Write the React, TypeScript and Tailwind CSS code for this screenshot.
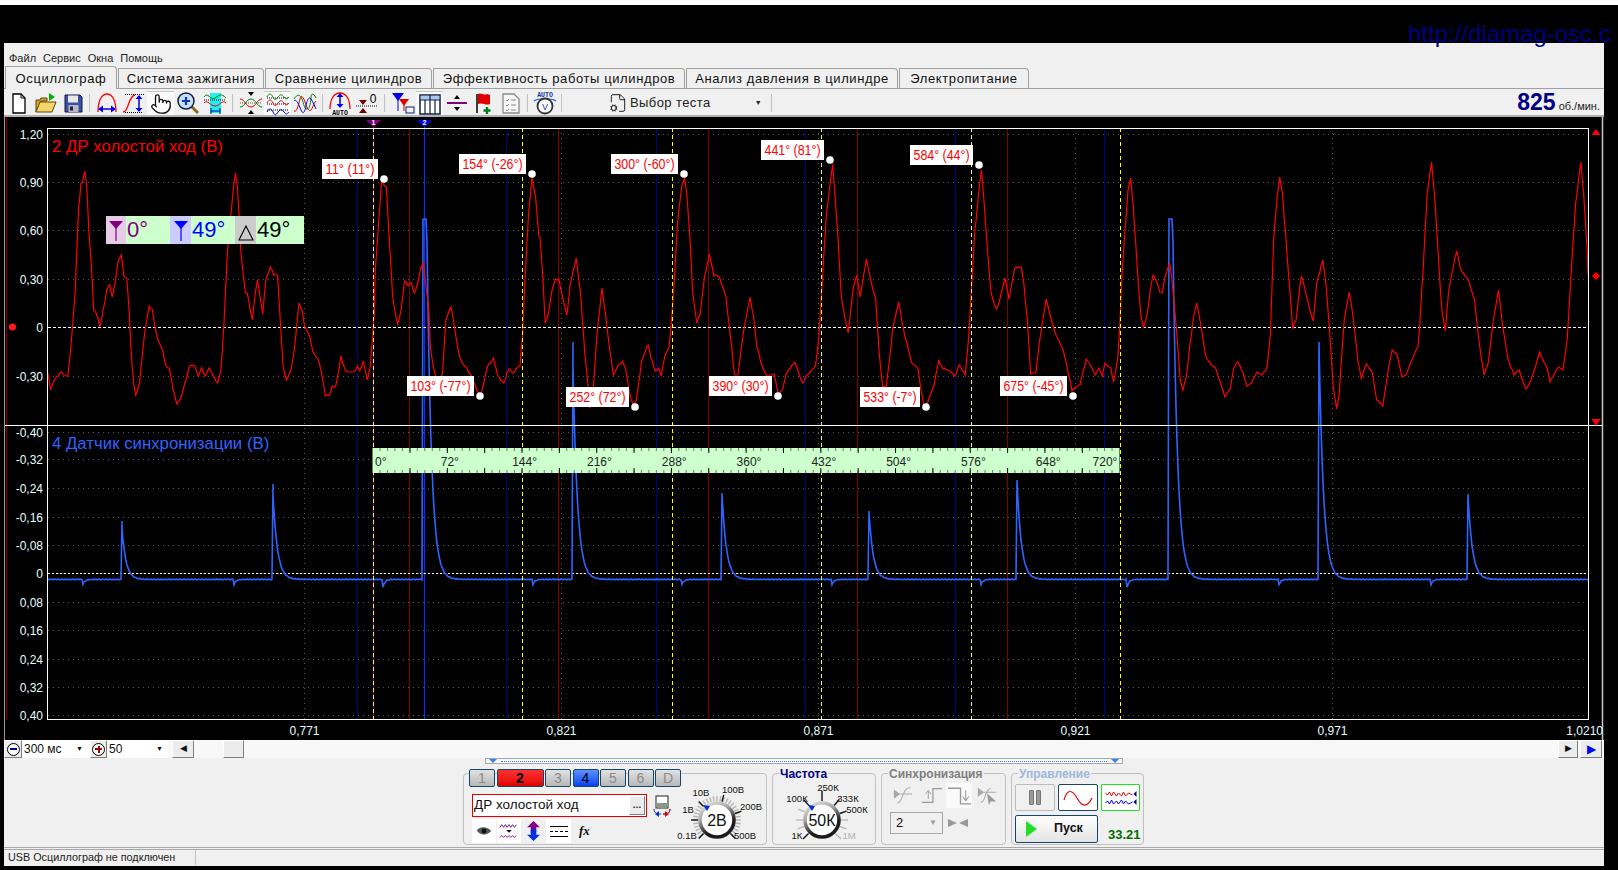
import { FileCog, Pointer } from "lucide-react";
import type { ReactNode } from "react";

// --- traced trace data (crop coordinates, converted below) ---
const RED_A = [137,750,147,808,155,785,165,770,178,757,185,765,197,768,205,690,212,600,218,520,228,270,235,195,240,185,246,155,252,200,258,330,265,430,272,570,280,580,290,620,300,570,310,510,318,495,326,530,334,490,343,425,352,402,360,470,368,475,375,570,380,680,388,790,394,825,405,790,420,640,433,560,442,570,452,630,460,665,472,690,482,740,492,745,503,810,514,855,528,825,540,780,550,737,566,737,575,768,585,745,595,768,607,745,620,768,632,792,642,745,650,620,660,400,670,290,678,200,684,155,690,210,695,300,700,400,708,480,713,520,718,520,725,560,733,600,740,530,748,478,755,530,763,580,772,480,785,440,795,462,806,465,815,620,822,740,832,780,845,750,855,690,868,548,878,575,885,620,900,650,908,695,925,720,932,750,945,825,955,828,965,800,975,800,990,712,1003,750,1015,758,1030,755,1038,737,1045,755,1055,725,1067,778,1075,740,1082,650,1087,580,1090,450,1100,300,1108,185,1115,195,1122,200,1130,350,1135,430,1140,530,1150,590,1155,615,1165,570,1175,480,1185,495,1195,490,1203,520,1213,490,1222,445,1230,430,1237,500,1245,560,1250,680,1258,740,1270,790,1285,760,1295,600,1310,558,1320,620,1330,690,1340,725,1355,745,1370,770,1385,810,1395,825,1405,790,1415,740,1433,715,1445,765,1463,790,1478,745,1490,760,1510,735,1517,650,1525,470,1535,280,1545,175,1555,230,1565,345];
const RED_B = [0,350,8,470,15,610,25,580,35,510,45,478,55,478,65,530,78,585,88,490,105,415,118,520,130,700,140,800,145,865,155,800,165,650,180,505,190,580,200,670,213,765,228,735,240,722,248,745,260,820,270,855,280,840,295,725,305,695,314,672,322,710,335,755,345,745,352,770,362,710,375,680,382,600,390,480,400,300,412,195,420,175,427,230,435,350,443,510,455,610,465,580,478,470,492,405,505,465,520,470,540,530,552,640,565,765,575,765,590,640,610,532,620,590,630,680,645,740,660,770,680,760,692,825,705,805,715,760,740,725,755,770,763,790,775,765,800,740,810,650,820,480,832,280,845,170,850,135,857,230,865,350,875,530,885,590,895,640,910,500,920,465,930,530,948,415,960,480,975,540,985,700,995,800,1005,800,1015,720,1025,620,1042,545,1050,600,1060,650,1080,730,1098,745,1105,800,1115,860,1125,850,1145,790,1158,722,1170,745,1185,750,1205,768,1218,735,1235,765,1245,650,1255,470,1262,340,1275,210,1282,150,1290,250,1300,400,1310,520,1325,570,1335,540,1350,475,1362,535,1378,445,1398,440,1405,490,1415,600,1425,760,1440,760,1450,670,1470,537,1485,600,1500,650,1520,690,1530,740,1545,810,1560,800];
const RED_C = [0,795,8,760,18,718,30,735,45,765,55,742,65,768,73,730,90,745,98,788,110,715,116,620,122,470,130,350,140,210,148,175,155,260,163,380,170,490,178,590,185,620,195,590,205,510,213,465,222,480,232,515,240,518,248,470,258,440,262,430,270,500,278,590,285,680,292,780,300,810,310,770,320,680,330,600,340,548,350,600,360,670,370,720,395,745,405,775,422,830,438,805,448,745,460,725,470,745,487,798,500,790,515,755,530,765,545,745,555,640,565,350,575,230,582,172,590,220,600,350,610,490,620,625,630,600,645,465,655,505,670,570,680,605,690,490,708,420,718,500,728,640,738,800,748,865,755,830,770,600,785,515,795,580,810,720,820,775,835,730,852,760,865,840,883,858,900,740,910,690,925,705,938,770,950,765,965,725,985,680,990,620,1000,450,1012,220,1025,125,1035,250,1050,500,1055,570,1065,630,1075,510,1090,430,1098,390,1110,450,1130,475,1150,540,1165,680,1178,765,1190,730,1205,600,1220,510,1232,620,1248,720,1265,765,1280,750,1300,810,1315,780,1340,698,1360,740,1370,785,1395,740,1408,750,1420,660,1435,400,1445,250,1460,125,1468,220,1478,380,1481,465];

function redPath() {
    const pts: [number, number][] = [];
    const add = (arr: number[], ox: number, sx: number) => {
        for (let i = 0; i < arr.length; i += 2) pts.push([ox + arr[i] / sx, 120 + arr[i + 1] / 3]);
    };
    add(RED_A, 0, 2.904);
    add(RED_B, 540, 2.904);
    add(RED_C, 1080, 2.915);
    let d = `M${pts[0][0].toFixed(1)} ${pts[0][1].toFixed(1)}`;
    for (let i = 1; i < pts.length; i++) {
        const [x0, y0] = pts[i - 1];
        const [x1, y1] = pts[i];
        const n = Math.max(1, Math.round((x1 - x0) / 1.5));
        for (let k = 1; k <= n; k++) {
            const x = x0 + ((x1 - x0) * k) / n;
            const y = y0 + ((y1 - y0) * k) / n + Math.sin(x * 2.3) * 0.5 + Math.sin(x * 5.1) * 0.4;
            d += `L${x.toFixed(1)} ${Math.round(y)}`;
        }
    }
    return d;
}

const SPIKES = [
    { x: 121.5, top: 521, h: 58, tau: 4 },
    { x: 272.5, top: 484, h: 95, tau: 4.4 },
    { x: 423, top: 219, h: 820, tau: 4.5 },
    { x: 572.5, top: 342, h: 237, tau: 4.5 },
    { x: 722, top: 493, h: 86, tau: 4.4 },
    { x: 869, top: 511, h: 68, tau: 4.2 },
    { x: 1017, top: 480, h: 99, tau: 4.4 },
    { x: 1169, top: 219, h: 820, tau: 4.5 },
    { x: 1319, top: 342, h: 237, tau: 4.5 },
    { x: 1468, top: 494, h: 85, tau: 4.4 },
];
const BLIPS = [83, 234, 383, 533, 682, 832, 981, 1127, 1279, 1431];

function bluePath() {
    let d = "M48 580";
    for (let x = 48; x <= 1588; x++) {
        const base = 579.4 + Math.sin(x * 1.7) * 0.4;
        let y = base;
        for (const s of SPIKES) {
            if (x === Math.round(s.x)) d += `L${x} ${s.top}`;
            if (x >= s.x) y = Math.min(y, Math.max(s.top, base - s.h * Math.exp(-(x - s.x) / s.tau)));
        }
        for (const b of BLIPS) {
            if (x >= b && x < b + 10) y += (b === 383 || b === 1127 ? 8 : 5) * Math.exp(-(x - b) / 2);
        }
        d += `L${x} ${y.toFixed(1)}`;
    }
    return d;
}

const AXIS_Y: [string, number][] = [
    ["1,20", 134], ["0,90", 182], ["0,60", 230], ["0,30", 279], ["0", 327], ["-0,30", 376],
    ["-0,40", 432], ["-0,32", 459], ["-0,24", 488], ["-0,16", 517], ["-0,08", 545], ["0", 573],
    ["0,08", 602], ["0,16", 630], ["0,24", 659], ["0,32", 687], ["0,40", 715],
];
const GRID_X = [304.5, 561.5, 818.5, 1075.5, 1332.5];
const X_LABELS = ["0,771", "0,821", "0,871", "0,921", "0,971"];
const YELLOW = [373.5, 522.5, 672.5, 821.5, 971.5, 1120.5];
const NAVY = [357.5, 506.5, 656.5, 805.5, 955.5, 1104.5];
const MAROON = [409.5, 558.5, 708.5, 857.5, 1007.5];

const PEAKS = [
    { t: "11° (11°)", x: 322, y: 159, w: 56, dx: 384, dy: 179 },
    { t: "154° (-26°)", x: 459, y: 154, w: 67, dx: 532, dy: 174 },
    { t: "103° (-77°)", x: 407, y: 376, w: 67, dx: 480, dy: 396 },
    { t: "300° (-60°)", x: 611, y: 154, w: 67, dx: 684, dy: 174 },
    { t: "441° (81°)", x: 761, y: 140, w: 63, dx: 830, dy: 160 },
    { t: "584° (44°)", x: 910, y: 145, w: 63, dx: 979, dy: 165 },
    { t: "252° (72°)", x: 566, y: 387, w: 63, dx: 635, dy: 407 },
    { t: "390° (30°)", x: 709, y: 376, w: 63, dx: 778, dy: 396 },
    { t: "533° (-7°)", x: 860, y: 387, w: 60, dx: 926, dy: 407 },
    { t: "675° (-45°)", x: 1000, y: 376, w: 67, dx: 1073, dy: 396 },
];

const RULER = ["0°", "72°", "144°", "216°", "288°", "360°", "432°", "504°", "576°", "648°", "720°"];

function Scope() {
    const minor: number[] = [];
    for (let x = 372.5; x < 1119; x += 7.47) minor.push(x);
    const major: number[] = [];
    for (let x = 410; x < 1119; x += 37.35) major.push(x);
    return (
        <svg viewBox="4 117 1600 623" className="absolute inset-0 h-full w-full" fontFamily="'Liberation Sans', Arial, sans-serif">
            {/* сетка */}
            {AXIS_Y.map(([l, y], i) => (
                <line key={i} x1={48} x2={1588} y1={y + 0.5} y2={y + 0.5} stroke="#5a5a5a" strokeDasharray="1 4" />
            ))}
            {GRID_X.map((x) => (
                <line key={x} x1={x} x2={x} y1={128} y2={725} stroke="#5a5a5a" strokeDasharray="1 4" />
            ))}
            {NAVY.map((x) => (
                <line key={x} x1={x} x2={x} y1={128} y2={719} stroke="#000080" />
            ))}
            {MAROON.map((x) => (
                <line key={x} x1={x} x2={x} y1={128} y2={719} stroke="#800000" />
            ))}
            <line x1={6.5} x2={6.5} y1={117} y2={720} stroke="#800000" />
            <line x1={4.5} x2={4.5} y1={117} y2={740} stroke="#9a9a9a" />
            <line x1={1602.5} x2={1602.5} y1={117} y2={740} stroke="#c8c8c8" strokeWidth={1.5} />
            <line x1={373.5} x2={373.5} y1={126} y2={719} stroke="#800080" />
            <line x1={424.5} x2={424.5} y1={126} y2={719} stroke="#0a2eff" strokeWidth={1.2} />

            <line x1={48} x2={1588} y1={327.5} y2={327.5} stroke="#fff" strokeDasharray="3 2" />
            <line x1={48} x2={1588} y1={573.5} y2={573.5} stroke="#fff" strokeDasharray="2 2" />

            {/* сигналы */}
            <path d={bluePath()} fill="none" stroke="#2f63ff" strokeWidth={1.6} />
            <path d={redPath()} fill="none" stroke="#ff0000" strokeWidth={1.2} />

            {YELLOW.map((x) => (
                <line key={x} x1={x} x2={x} y1={128} y2={719} stroke="#ffff00" strokeDasharray="4 3" />
            ))}

            {/* рамка */}
            <rect x={47.5} y={128.5} width={1541} height={591} fill="none" stroke="#fff" />
            <line x1={5} x2={1602} y1={425.5} y2={425.5} stroke="#fff" />

            {/* линейка градусов */}
            <rect x={372.5} y={448} width={747} height={25} fill="#ccffcc" />
            {minor.map((x) => (
                <g key={x} stroke="#777">
                    <line x1={x} x2={x} y1={448} y2={451} />
                    <line x1={x} x2={x} y1={470} y2={473} />
                </g>
            ))}
            {major.map((x) => (
                <g key={x} stroke="#111">
                    <line x1={x} x2={x} y1={448} y2={453} />
                    <line x1={x} x2={x} y1={468} y2={473} />
                </g>
            ))}
            {RULER.map((t, i) => (
                <text key={t} x={i === 0 ? 375 : i === 10 ? 1105 : 375 + i * 74.8} y={466} fontSize={12} fill="#222" textAnchor={i === 0 ? "start" : "middle"}>
                    {t}
                </text>
            ))}

            {/* оси */}
            {AXIS_Y.map(([l, y], i) => (
                <text key={i} x={43} y={y + 4.5} fontSize={12} fill="#e8ffff" textAnchor="end">
                    {l}
                </text>
            ))}
            {X_LABELS.map((l, i) => (
                <text key={l} x={GRID_X[i]} y={735} fontSize={12} fill="#e8ffff" textAnchor="middle">
                    {l}
                </text>
            ))}
            <text x={1603} y={735} fontSize={12} fill="#e8ffff" textAnchor="end">
                1,0210
            </text>

            {/* маркеры */}
            <polygon points="366,120 381,120 373.5,127" fill="#800080" />
            <text x={373.5} y={125} fontSize={7} fontWeight={700} fill="#fff" textAnchor="middle">1</text>
            <polygon points="417,120 432,120 424.5,127" fill="#0000ee" />
            <text x={424.5} y={125} fontSize={7} fontWeight={700} fill="#fff" textAnchor="middle">2</text>
            <circle cx={12.5} cy={327} r={3.5} fill="#ff1a1a" />
            <polygon points="1591.5,135 1596,129 1600.5,135" fill="#ff0000" />
            <polygon points="1592,276 1596,272 1600,276 1596,280" fill="#ff0000" />
            <polygon points="1591.5,419 1600.5,419 1596,426" fill="#ff0000" />

            {/* подписи пиков */}
            {PEAKS.map((p) => (
                <g key={p.t}>
                    <rect x={p.x} y={p.y} width={p.w} height={20} fill="#fff" />
                    <text x={p.x + p.w / 2} y={p.y + 15} fontSize={14} fill="#ff0000" textAnchor="middle" textLength={p.w - 7} lengthAdjust="spacingAndGlyphs">
                        {p.t}
                    </text>
                    <circle cx={p.dx} cy={p.dy} r={3.8} fill="#fff" />
                </g>
            ))}
        </svg>
    );
}

// --- значки панели инструментов ---
const I = ({ children }: { children: ReactNode }) => (
    <svg viewBox="0 0 24 24" className="h-6 w-6 overflow-visible" fill="none">
        {children}
    </svg>
);
const BlueV = ({ x, y1, y2 }: { x: number; y1: number; y2: number }) => (
    <g>
        <line x1={x} x2={x} y1={y1 + 3} y2={y2 - 3} stroke="#0000ee" strokeWidth={1.5} />
        <polygon points={`${x - 3.5},${y1 + 4} ${x},${y1} ${x + 3.5},${y1 + 4}`} fill="#0000ee" />
        <polygon points={`${x - 3.5},${y2 - 4} ${x},${y2} ${x + 3.5},${y2 - 4}`} fill="#0000ee" />
    </g>
);
const IconNew = () => (
    <I>
        <path d="M6 3h8l4 4v15H6z" fill="#fff" stroke="#000" strokeWidth={1.3} />
        <path d="M14 3v4h4" stroke="#000" />
    </I>
);
const IconOpen = () => (
    <I>
        <path d="M2 21V9h4l1-2h6v3H7L2 21z" fill="#d9a520" stroke="#5a4510" />
        <path d="M2 21l4-10h16l-4 10z" fill="#f5d66a" stroke="#5a4510" />
        <path d="M15 9V2l6 4-6 4" fill="#00b000" />
    </I>
);
const IconSave = () => (
    <I>
        <path d="M4 4h15l2 2v15H4z" fill="#3c4fa0" stroke="#101840" />
        <rect x={7} y={4.5} width={10} height={7} fill="#e8e8e8" />
        <rect x={7.5} y={14} width={10} height={7} fill="#b8b8c8" />
        <rect x={9} y={15.5} width={3} height={4} fill="#223" />
    </I>
);
const IconArcH = () => (
    <I>
        <path d="M3 21C3 9 7 3 12 3s9 6 9 18" stroke="#f00" strokeWidth={1.3} />
        <line x1={5} x2={19} y1={18} y2={18} stroke="#0000ee" strokeWidth={1.5} />
        <polygon points="8,14.5 3,18 8,21.5" fill="#0000ee" />
        <polygon points="16,14.5 21,18 16,21.5" fill="#0000ee" />
    </I>
);
const IconCurve = () => (
    <I>
        <path d="M1 21c6 0 5-16 12-17" stroke="#f00" strokeWidth={1.3} />
        <line x1={3} x2={22} y1={3.5} y2={3.5} stroke="#000" strokeDasharray="1 1" />
        <line x1={3} x2={20} y1={21.5} y2={21.5} stroke="#000" strokeDasharray="1 1" />
        <BlueV x={17} y1={4} y2={21} />
    </I>
);
const IconZoom = () => (
    <I>
        <line x1={14} y1={14} x2={22} y2={22} stroke="#8a6a20" strokeWidth={3} />
        <circle cx={10} cy={10} r={8} fill="#c8e0f8" stroke="#102040" strokeWidth={1.5} />
        <path d="M6 10h8M10 6v8" stroke="#1030c0" strokeWidth={2.2} />
    </I>
);
const IconCyan = () => (
    <I>
        <rect x={7} y={2} width={11} height={20} fill="#22f0f0" />
        <path d="M1 6c4-6 6 4 11 1s6-5 11 0" stroke="#008000" />
        <path d="M1 12c4-4 6 3 11 3s7-7 11-3" stroke="#e00000" />
        <line x1={1} x2={23} y1={9} y2={9} stroke="#000" strokeDasharray="1 1" />
        <line x1={8} x2={17} y1={20} y2={20} stroke="#0000a0" />
        <path d="M8 17v6M17 17v6" stroke="#0000a0" />
    </I>
);
const IconCross = () => (
    <I>
        <path d="M1 8c5 0 6 8 11 8s6-8 11-8" stroke="#e00000" />
        <path d="M1 16c5 0 6-8 11-8s6 8 11 8" stroke="#008000" />
        <line x1={1} x2={23} y1={12} y2={12} stroke="#555" strokeDasharray="1 1" />
        <polygon points="9,1 15,1 12,5" fill="#000" />
        <polygon points="9,23 15,23 12,19" fill="#000" />
    </I>
);
const wave = (y: number) => `M1 ${y}c2-4 4-4 6 0s3 3 5 0 4-3 6 0 3 2 5 0`;
const IconWaves = () => (
    <I>
        <line x1={1} x2={23} y1={6} y2={6} stroke="#000" strokeDasharray="1 1" />
        <line x1={1} x2={23} y1={12} y2={12} stroke="#000" strokeDasharray="1 1" />
        <line x1={1} x2={23} y1={18} y2={18} stroke="#000" strokeDasharray="1 1" />
        <path d={wave(5)} stroke="#008000" />
        <path d={wave(11)} stroke="#e00000" />
        <path d={wave(20)} stroke="#0000ee" />
    </I>
);
const IconOverlap = () => (
    <I>
        <path d="M1 8c3-5 6-5 8 0s2 10 5 10 4-8 4-12 3-4 5 1" stroke="#008000" />
        <path d="M1 20c3 2 5-8 6-12s3-3 5 3 4 10 6 8 2-6 5-9" stroke="#e00000" />
        <path d="M1 10c2-3 5 4 7 9s4 2 5-4 3-10 5-7 4 8 5 10" stroke="#0000ee" />
    </I>
);
const IconAutoArc = () => (
    <I>
        <path d="M2 18C2 8 6 2 12 2s10 6 10 16" stroke="#f00" strokeWidth={1.3} />
        <BlueV x={12} y1={2} y2={17} />
        <text x={12} y={24} fontSize={6.5} fontWeight={700} fill="#000" textAnchor="middle" fontFamily="'Liberation Mono', monospace">AUTO</text>
    </I>
);
const IconZero = () => (
    <I>
        <line x1={1} x2={23} y1={15} y2={15} stroke="#000" strokeDasharray="1 1" />
        <polygon points="4,9 12,9 8,14" fill="#700000" />
        <polygon points="4,22 12,22 8,17" fill="#700000" />
        <text x={18} y={12} fontSize={12} fill="#000" textAnchor="middle" fontFamily="'Liberation Sans', sans-serif">0</text>
    </I>
);
const IconFilters = () => (
    <I>
        <polygon points="1,2 13,2 7,10" fill="#0000ee" />
        <line x1={7} y1={8} x2={7} y2={20} stroke="#0000ee" />
        <polygon points="8,8 18,8 13,15" fill="#e00000" />
        <line x1={13} y1={13} x2={13} y2={20} stroke="#e00000" />
        <rect x={15} y={16} width={8} height={6} fill="#eef" stroke="#102060" />
    </I>
);
const IconTable = () => (
    <I>
        <rect x={2} y={3} width={20} height={19} fill="#fff" stroke="#102040" strokeWidth={1.5} />
        <rect x={2.8} y={3.8} width={18.5} height={4} fill="#a8c8ef" />
        <path d="M2 8h20M7 8v14M12 3v19M17 8v14" stroke="#102040" strokeWidth={1.2} />
    </I>
);
const IconDivide = () => (
    <I>
        <rect x={2} y={11} width={20} height={2} fill="#800080" />
        <polygon points="9,8 15,8 12,4" fill="#000" />
        <polygon points="9,16 15,16 12,20" fill="#000" />
    </I>
);
const IconFlag = () => (
    <I>
        <line x1={5} y1={3} x2={5} y2={22} stroke="#000" strokeWidth={1.5} />
        <path d="M6 3c3-2 6 2 9 0l3 1v9c-4 2-8-2-12 0z" fill="#e00000" />
        <path d="M15 16v7M11.500 19.500h7" stroke="#00801c" strokeWidth={2.4} />
    </I>
);
const IconCheckDoc = () => (
    <I>
        <path d="M4 3h11l5 5v14H4z" fill="#f7f7f7" stroke="#8a8a8a" strokeWidth={1.3} />
        <path d="M7 9l1 1 2-2M7 14l1 1 2-2M7 19l1 1 2-2M12 9h5M12 14h5M12 19h5" stroke="#8a8a8a" />
    </I>
);
const IconAutoV = () => (
    <I>
        <text x={12} y={6} fontSize={6.5} fontWeight={700} fill="#1030a0" textAnchor="middle" fontFamily="'Liberation Mono', monospace">AUTO</text>
        <path d="M1 10c4-3 18-3 22 0" stroke="#1060e0" strokeWidth={1.2} />
        <circle cx={12} cy={15} r={7.500} fill="#fff" stroke="#333" strokeWidth={1.8} />
        <text x={12} y={18.500} fontSize={9} fill="#1030a0" textAnchor="middle" fontFamily="'Liberation Sans', sans-serif">V</text>
    </I>
);

function Tool({ children, pressed }: { children: ReactNode; pressed?: boolean }) {
    return (
        <div className={pressed ? "flex h-full w-[27px] items-center justify-center bg-[#fafafa] border-t border-t-[#c8c8c8]" : "flex h-full w-[27px] items-center justify-center"}>
            {children}
        </div>
    );
}
function Sep({ w }: { w: string }) {
    return (
        <div className={`flex h-full justify-center py-[3px] ${w}`}>
            <div className="w-px bg-[#c0c0c0]" />
        </div>
    );
}

const TABS = [
    { t: "Осциллограф", w: "w-[112px]", active: true },
    { t: "Система зажигания", w: "w-[146px]" },
    { t: "Сравнение цилиндров", w: "w-[167px]" },
    { t: "Эффективность работы цилиндров", w: "w-[252px]" },
    { t: "Анализ давления в цилиндре", w: "w-[212px]" },
    { t: "Электропитание", w: "w-[130px]" },
];

function Knob({ id, w, cx, labels, ticks, value }: { id: string; w: number; cx: number; labels: [string, number, number, string?][]; ticks: [number, string, number][]; value: string }) {
    const cy = 38;
    return (
        <svg width={w} height={63} viewBox={`0 0 ${w} 63`} className="shrink-0" fontFamily="'Liberation Sans', sans-serif">
            <defs>
                <linearGradient id={id} x1="0" y1="0" x2="0.5" y2="1">
                    <stop offset="0" stopColor="#e8e8e8" />
                    <stop offset="0.4" stopColor="#a8a8a8" />
                    <stop offset="0.8" stopColor="#1c1c1c" />
                </linearGradient>
            </defs>
            {ticks.map(([a, c, r2], i) => {
                const rad = (a * Math.PI) / 180;
                return <line key={i} x1={cx + Math.cos(rad) * 19} y1={cy + Math.sin(rad) * 19} x2={cx + Math.cos(rad) * r2} y2={cy + Math.sin(rad) * r2} stroke={c} strokeWidth={1.4} />;
            })}
            <circle cx={cx} cy={cy} r={17} fill="#fff" stroke={`url(#${id})`} strokeWidth={3.6} />
            <polygon points={`${cx - 14},${cy - 15} ${cx - 7},${cy - 14} ${cx - 10},${cy - 9}`} fill="#0030d0" />
            <text x={cx} y={cy + 5.5} fontSize={16} fill="#111" textAnchor="middle">{value}</text>
            {labels.map(([t, x, y, c]) => (
                <text key={t} x={x} y={y} fontSize={9.5} fill={c ?? "#111"} textAnchor="middle">{t}</text>
            ))}
        </svg>
    );
}

const VOLT_TICKS: [number, string, number][] = [];
for (let a = 135; a <= 405; a += 9) VOLT_TICKS.push([a, "#b4b4b4", 24]);
for (const a of [135, 180, 225, 285, 340, 45]) VOLT_TICKS.push([a, "#111", 26]);
const FREQ_TICKS: [number, string, number][] = [
    [135, "#111", 27], [160, "#bbb", 26], [180, "#bbb", 26], [205, "#bbb", 26], [228, "#111", 27], [270, "#111", 29],
    [310, "#111", 27], [340, "#111", 26], [0, "#bbb", 26], [20, "#bbb", 26], [45, "#bbb", 27],
];

function ChButton({ label, variant, w }: { label: string; variant?: "red" | "blue"; w: string }) {
    const tone = variant === "red"
        ? "bg-gradient-to-b from-[#ff3030] to-[#e00000] text-black font-bold"
        : variant === "blue"
            ? "bg-gradient-to-b from-[#5f8fff] to-[#0a3ef0] text-black"
            : "bg-gradient-to-b from-[#e2e2e2] to-[#b8b8b8] text-[#8a8a8a]";
    return (
        <div className={`flex h-[18px] items-center justify-center rounded-[2px] border border-[#14456e] text-[14px] ${w} ${tone}`}>{label}</div>
    );
}

function Group({ title, tone, className, children }: { title?: string; tone?: string; className: string; children: ReactNode }) {
    return (
        <div className={`relative h-[72px] rounded-[4px] border border-[#c0c0c0] ${className}`}>
            {title && <div className={`absolute -top-[7px] left-[6px] bg-[#f0f0f0] px-px text-[12px] leading-[14px] font-bold ${tone}`}>{title}</div>}
            {children}
        </div>
    );
}

const raised = "border border-t-white border-l-white border-r-[#808080] border-b-[#808080] bg-[#ececec]";

export default function App() {
    return (
        <div className="relative flex h-[870px] w-[1618px] flex-col overflow-hidden bg-black font-['Liberation_Sans',Arial,sans-serif]">
            <div className="h-[5px] shrink-0 bg-white" />
            <div className="h-[38px] shrink-0" />
            <div className="ml-[4px] flex h-[823px] w-[1600px] shrink-0 flex-col bg-[#f0f0f0] text-[#111]">
                {/* меню */}
                <div className="flex h-[24px] items-end gap-[7px] pb-[2px] pl-[5px] text-[11px] leading-[14px] text-[#222]">
                    <span>Файл</span>
                    <span>Сервис</span>
                    <span>Окна</span>
                    <span>Помощь</span>
                </div>

                {/* вкладки */}
                <div className="flex h-[22px] items-end gap-[1px] border-b border-[#a0a0a0] pl-px">
                    {TABS.map((t) => (
                        <div
                            key={t.t}
                            className={
                                t.active
                                    ? `-mb-px flex h-[23px] items-center justify-center rounded-tr-[4px] border border-b-0 border-[#a0a0a0] bg-[#f0f0f0] pt-px text-[13px] tracking-[0.65px] ${t.w}`
                                    : `flex h-[20px] items-center justify-center rounded-tr-[4px] border border-b-0 border-[#a0a0a0] bg-[#f0f0f0] pt-px text-[13px] tracking-[0.6px] ${t.w}`
                            }
                        >
                            {t.t}
                        </div>
                    ))}
                </div>

                {/* панель инструментов */}
                <div className="flex h-[28px] items-center border-b-2 border-[#b0b0b0] pt-[2px] pl-px">
                    <Tool><IconNew /></Tool>
                    <Tool><IconOpen /></Tool>
                    <Tool><IconSave /></Tool>
                    <Sep w="w-[7px]" />
                    <Tool><IconArcH /></Tool>
                    <Tool><IconCurve /></Tool>
                    <Tool pressed><Pointer className="h-[22px] w-[22px]" fill="#fff" strokeWidth={1.4} /></Tool>
                    <Tool><IconZoom /></Tool>
                    <Tool><IconCyan /></Tool>
                    <Sep w="w-[9px]" />
                    <Tool><IconCross /></Tool>
                    <Tool pressed><IconWaves /></Tool>
                    <Tool><IconOverlap /></Tool>
                    <Sep w="w-[8px]" />
                    <Tool><IconAutoArc /></Tool>
                    <Tool><IconZero /></Tool>
                    <Sep w="w-[9px]" />
                    <Tool><IconFilters /></Tool>
                    <Tool pressed><IconTable /></Tool>
                    <Tool><IconDivide /></Tool>
                    <Tool><IconFlag /></Tool>
                    <Tool><IconCheckDoc /></Tool>
                    <Sep w="w-[7px]" />
                    <Tool><IconAutoV /></Tool>
                    <Sep w="w-[7px]" />
                    <div className="flex h-full w-[205px] items-center pl-[43px] text-[13px] tracking-[0.4px] text-[#222]">
                        <FileCog className="mr-[2px] h-5 w-5" strokeWidth={1.2} />
                        <span>Выбор теста</span>
                        <span className="ml-auto mr-[8px] text-[7px]">▼</span>
                    </div>
                    <Sep w="w-[3px]" />
                    <div className="ml-auto flex items-baseline pr-[4px]">
                        <span className="text-[23px] leading-none font-bold text-[#000080]">825</span>
                        <span className="ml-[3px] text-[11px] text-[#222]">об./мин.</span>
                    </div>
                </div>

                {/* осциллограмма */}
                <div className="relative h-[623px] shrink-0 bg-black">
                    <Scope />
                    <div className="absolute top-[21px] left-[48px] text-[16.800px] leading-[18px] whitespace-nowrap text-[#ff0000]">2 ДР холостой ход (В)</div>
                    <div className="absolute top-[318px] left-[48px] text-[16.800px] leading-[18px] whitespace-nowrap text-[#2f63ff]">4 Датчик синхронизации (В)</div>
                    <div className="absolute top-[99px] left-[102px] flex h-[28px] w-[198px] items-center bg-[#ccffcc] text-[22px] leading-none">
                        <div className="flex h-full w-[20px] items-center justify-center bg-[#e6cce6]">
                            <svg viewBox="0 0 20 28" className="h-[28px] w-[20px]">
                                <polygon points="3,5 17,5 10,13" fill="#800080" />
                                <line x1={10} y1={10} x2={10} y2={25} stroke="#800080" strokeWidth={1.2} />
                            </svg>
                        </div>
                        <div className="w-[44px] pl-px text-[#800080]">0°</div>
                        <div className="flex h-full w-[21px] items-center justify-center bg-[#ccccff]">
                            <svg viewBox="0 0 20 28" className="h-[28px] w-[20px]">
                                <polygon points="3,5 17,5 10,13" fill="#0000ff" />
                                <line x1={10} y1={10} x2={10} y2={25} stroke="#0000ff" strokeWidth={1.2} />
                            </svg>
                        </div>
                        <div className="w-[44px] pl-px text-[#0000ff]">49°</div>
                        <div className="flex h-full w-[21px] items-center justify-center bg-[#cccccc]">
                            <svg viewBox="0 0 20 28" className="h-[28px] w-[20px]">
                                <polygon points="10,10 17,24 3,24" fill="none" stroke="#000" strokeWidth={1.1} />
                            </svg>
                        </div>
                        <div className="pl-px text-black">49°</div>
                    </div>
                </div>

                {/* масштаб и прокрутка */}
                <div className="flex h-[18px] shrink-0 items-stretch bg-[#f8f8f8] text-[12px]">
                    <div className={`flex w-[18px] items-center justify-center ${raised}`}>
                        <div className="flex h-[13px] w-[13px] items-center justify-center rounded-full border border-black bg-white">
                            <div className="h-[2px] w-[7px] bg-[#000080]" />
                        </div>
                    </div>
                    <div className="flex w-[67px] items-center bg-white pl-[2px]">
                        300 мс
                        <span className="ml-auto mr-[6px] text-[7px]">▼</span>
                    </div>
                    <div className={`ml-px flex w-[17px] items-center justify-center ${raised}`}>
                        <div className="relative flex h-[13px] w-[13px] items-center justify-center rounded-full border border-black bg-white">
                            <div className="h-[2px] w-[7px] bg-[#a00000]" />
                            <div className="absolute h-[7px] w-[2px] bg-[#a00000]" />
                        </div>
                    </div>
                    <div className="flex w-[61px] items-center bg-white pl-[2px]">
                        50
                        <span className="ml-auto mr-[5px] text-[7px]">▼</span>
                    </div>
                    <div className={`ml-[4px] flex w-[22px] items-center justify-center text-[9px] ${raised}`}>◀</div>
                    <div className="flex flex-1 items-stretch pl-[29px]">
                        <div className={`w-[21px] ${raised}`} />
                    </div>
                    <div className={`flex w-[20px] items-center justify-center text-[9px] ${raised}`}>▶</div>
                    <div className={`ml-[2px] mr-[2px] flex w-[22px] items-center justify-center text-[12px] text-[#0000ff] ${raised}`}>▶</div>
                </div>

                {/* панель управления */}
                <div className="h-[89px] shrink-0">
                    <div className="ml-[481px] flex h-[6px] w-[638px] items-center justify-between border border-[#a8a8a8] bg-[#f8f8f8] px-[3px]">
                        <div className="h-0 w-0 border-x-[4px] border-t-[4px] border-x-transparent border-t-[#2f80ff]" />
                        <div className="mx-[4px] flex-1 border-t border-dotted border-[#2f80ff]" />
                        <div className="h-0 w-0 border-x-[4px] border-t-[4px] border-x-transparent border-t-[#2f80ff]" />
                    </div>
                    <div className="mt-[9px] ml-[459px] flex gap-[5px]">
                        <Group className="flex w-[304px]">
                            <div className="-mt-[5px] flex w-[217px] flex-col pl-[5px]">
                                <div className="flex gap-[1.500px]">
                                    <ChButton label="1" w="w-[26px]" />
                                    <ChButton label="2" variant="red" w="w-[47px]" />
                                    <ChButton label="3" w="w-[26px]" />
                                    <ChButton label="4" variant="blue" w="w-[26px]" />
                                    <ChButton label="5" w="w-[26px]" />
                                    <ChButton label="6" w="w-[26px]" />
                                    <ChButton label="D" w="w-[26px]" />
                                </div>
                                <div className="mt-[7px] flex items-center">
                                    <div className="ml-[3px] flex h-[23px] w-[175px] items-center justify-between border border-[#e00000] bg-white pl-[1px] pr-px text-[13.500px]">
                                        ДР холостой ход
                                        <div className={`flex h-[19px] w-[16px] items-center justify-center text-[9px] font-bold leading-none ${raised}`}>…</div>
                                    </div>
                                    <svg viewBox="0 0 20 22" className="ml-[5px] h-[22px] w-[20px]">
                                        <rect x={4} y={1} width={12} height={12} fill="#fff" stroke="#222" />
                                        <rect x={5} y={8} width={10} height={4} fill="#889988" />
                                        <path d="M2 14c0 5 4 5 7 5M18 14c0 5-4 5-7 5" fill="none" stroke="#0030c0" />
                                        <path d="M18 14c0 5-4 5-7 5" fill="none" stroke="#e00000" />
                                        <polygon points="7,16 7,22 3,19" fill="#0030c0" />
                                        <polygon points="13,16 13,22 17,19" fill="#e00000" />
                                    </svg>
                                </div>
                                <div className="mt-[2px] ml-[3px] flex h-[24px] items-center">
                                    <div className="flex h-[24px] w-[24px] items-center justify-center bg-white">
                                        <svg viewBox="0 0 20 14" className="h-[12px] w-[16px]">
                                            <path d="M1 6c4-5 13-5 18 1-5 6-14 6-18-1z" fill="#555" />
                                            <circle cx={10} cy={7} r={3} fill="#111" />
                                        </svg>
                                    </div>
                                    <div className="ml-px flex h-[24px] w-[24px] items-center justify-center bg-white">
                                        <svg viewBox="0 0 22 22" className="h-[20px] w-[20px]" fill="none" stroke="#800080">
                                            <path d="M1 7l2-3 2 3 2-3 2 3 2-3 2 3 2-3 2 3 2-3" />
                                            <path d="M1 18l2-2 2 2 2-2 2 2 2-2 2 2 2-2 2 2 2-2" />
                                            <polygon points="8,10 14,10 11,13" fill="#111" stroke="none" />
                                        </svg>
                                    </div>
                                    <div className="flex w-[25px] justify-center">
                                        <svg viewBox="0 0 18 24" className="h-[22px] w-[17px]">
                                            <polygon points="9,1 16,8 12,8 12,14 6,14 6,8 2,8" fill="#800080" />
                                            <polygon points="9,23 16,16 12,16 12,10 6,10 6,16 2,16" fill="#0030e0" />
                                        </svg>
                                    </div>
                                    <div className="flex h-[24px] w-[25px] flex-col items-center justify-center gap-[4px] bg-white">
                                        <div className="h-px w-[18px] bg-black" />
                                        <div className="w-[18px] border-t border-dashed border-black" />
                                        <div className="h-px w-[18px] bg-black" />
                                    </div>
                                    <span className="ml-[8px] font-['Liberation_Serif',serif] text-[13px] font-bold italic">fx</span>
                                </div>
                            </div>
                            <div className="mt-[8px] -ml-[9px]">
                                <Knob
                                    id="knobV"
                                    w={93}
                                    cx={45}
                                    value="2В"
                                    ticks={VOLT_TICKS}
                                    labels={[["10В", 29, 14], ["100В", 61, 11], ["200В", 79, 28], ["1В", 16, 31], ["0.1В", 15, 57], ["500В", 73, 57]]}
                                />
                            </div>
                        </Group>
                        <Group title="Частота" tone="text-[#000080]" className="w-[104px]">
                            <div className="mt-[8px]">
                                <Knob
                                    id="knobF"
                                    w={102}
                                    cx={49}
                                    value="50К"
                                    ticks={FREQ_TICKS}
                                    labels={[["250К", 55, 9], ["100К", 24, 20], ["333К", 75, 20], ["500К", 84, 31], ["1К", 24, 57], ["1М", 76, 57, "#b0b0b0"]]}
                                />
                            </div>
                        </Group>
                        <Group title="Синхронизация" tone="text-[#808080]" className="w-[125px]">
                            <div className="mt-[8px] flex h-[26px] items-center pl-[6px]">
                                <div className="flex w-[29px] justify-center">
                                    <svg viewBox="0 0 24 24" className="h-[22px] w-[22px]" fill="none" stroke="#a8a8a8">
                                        <polygon points="2,6 9,11 2,16" fill="#a8a8a8" stroke="none" />
                                        <path d="M6 21c6 0 5-18 14-17M9 11h13" strokeWidth={1.1} />
                                    </svg>
                                </div>
                                <div className="flex w-[29px] justify-center">
                                    <svg viewBox="0 0 24 24" className="h-[22px] w-[22px]" fill="none" stroke="#999">
                                        <path d="M1 20h12V5h10" strokeWidth={1.3} />
                                        <path d="M8 16V8M5 11l3-4 3 4" />
                                    </svg>
                                </div>
                                <div className="flex h-[25px] w-[26px] justify-center bg-[#fafafa]">
                                    <svg viewBox="0 0 24 24" className="h-[25px] w-[25px]" fill="none" stroke="#999">
                                        <path d="M1 5h12v15h10" strokeWidth={1.3} />
                                        <path d="M18 7v9M15 13l3 4 3-4" />
                                    </svg>
                                </div>
                                <div className="flex w-[30px] justify-center">
                                    <svg viewBox="0 0 24 24" className="h-[22px] w-[22px]" fill="none" stroke="#a8a8a8">
                                        <polygon points="2,4 9,9 2,14" fill="#a8a8a8" stroke="none" />
                                        <path d="M5 20c6 0 4-14 11-15M9 9h13" strokeWidth={1.1} />
                                        <polygon points="12,10 22,19 16,19 14,23" fill="#999" stroke="none" />
                                    </svg>
                                </div>
                            </div>
                            <div className="mt-[4px] flex items-center pl-[8px]">
                                <div className="flex h-[22px] w-[53px] items-center border border-[#a8a8a8] pl-[5px] text-[13px]">
                                    2
                                    <span className="ml-auto mr-[5px] text-[8px] text-[#a0a0a0]">▼</span>
                                </div>
                                <svg viewBox="0 0 20 10" className="ml-[5px] h-[10px] w-[20px]" fill="#999">
                                    <polygon points="0,1 9,5 0,9" />
                                    <polygon points="20,1 11,5 20,9" />
                                </svg>
                            </div>
                        </Group>
                        <Group title="Управление" tone="text-[#a0b8d8]" className="w-[133px]">
                            <div className="mt-[10px] flex gap-[3px] pl-[3px]">
                                <div className="flex h-[27px] w-[40px] items-center justify-center gap-[2px] rounded-[2px] border border-[#bdbdbd]">
                                    <div className="h-[15px] w-[5px] rounded-[1px] bg-[#999] border border-[#777]" />
                                    <div className="h-[15px] w-[5px] rounded-[1px] bg-[#999] border border-[#777]" />
                                </div>
                                <div className="flex h-[27px] w-[40px] items-center justify-center rounded-[2px] border border-[#14456e] bg-white">
                                    <svg viewBox="0 0 32 20" className="h-[20px] w-[32px]" fill="none" stroke="#e00000" strokeWidth={1.2}>
                                        <path d="M2 12C5 1 10 1 15 10s10 10 15 0" />
                                    </svg>
                                </div>
                                <div className="flex h-[27px] w-[39px] items-center justify-center rounded-[1px] border border-[#22e022] bg-white">
                                    <svg viewBox="0 0 32 20" className="h-[20px] w-[33px]" fill="none">
                                        <path d="M1 5l2 2 2-3 2 4 2-4 3 4 2-3 3 3 2-4 2 4 3-3 4 2" stroke="#e00000" />
                                        <path d="M1 15l2-2 2 3 2-4 2 4 3-3 2 3 3-4 2 4 2-3 3 3 4-2" stroke="#0000ee" />
                                        <polygon points="29,6 32,3 32,9" fill="#000080" />
                                        <polygon points="29,14 32,11 32,17" fill="#000080" />
                                    </svg>
                                </div>
                            </div>
                            <div className="mt-[2px] flex items-center pl-[3px]">
                                <div className="flex h-[28px] w-[83px] items-center rounded-[2px] border border-[#14456e] bg-gradient-to-b from-white to-[#e4e4e4] pl-[10px]">
                                    <div className="h-0 w-0 border-y-[8px] border-l-[11px] border-y-transparent border-l-[#22e022]" />
                                    <span className="ml-[17px] text-[12.500px] font-bold">Пуск</span>
                                </div>
                                <span className="ml-[10px] pt-[12px] text-[13px] font-bold text-[#007000]">33.21</span>
                            </div>
                        </Group>
                    </div>
                </div>

                {/* строка состояния */}
                <div className="flex h-[19px] shrink-0 items-center border-t-[3px] border-double border-[#a8a8a8] pb-px text-[10.800px] text-[#222]">
                    <div className="flex h-full w-[192px] items-center border-r border-[#c0c0c0] pl-[4px]">USB Осциллограф не подключен</div>
                </div>
            </div>
            <div className="absolute top-[20px] left-[1408px] text-[24px] leading-[28px] whitespace-nowrap text-[#000080]">http://diamag-osc.c</div>
        </div>
    );
}
